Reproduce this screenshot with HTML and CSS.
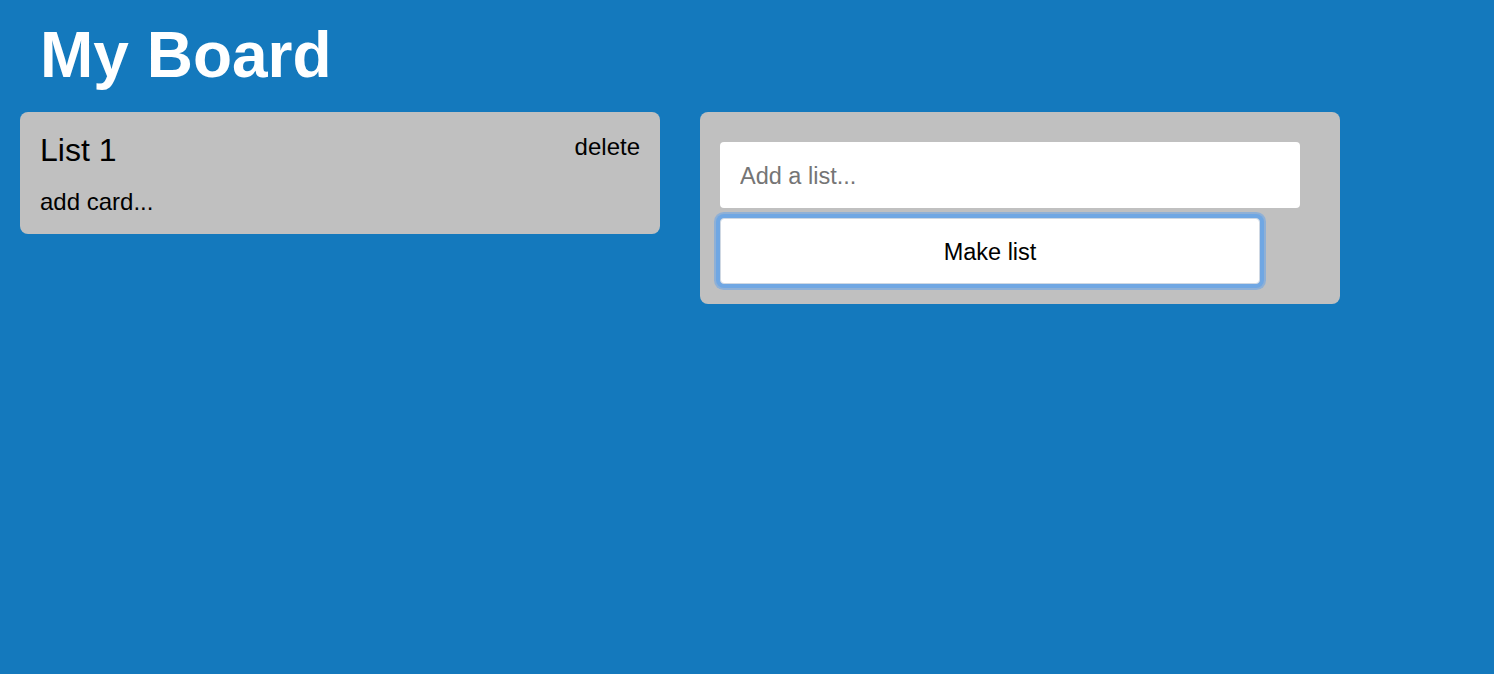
FILE: index.html
```html
<!DOCTYPE html>
<html>
<head>
<meta charset="utf-8">
<link rel="stylesheet" href="styles.css">
</head>
<body>
<h1 class="board-title">My Board</h1>
<div class="board">
  <div class="list">
    <div class="list-header">
      <h2 class="list-title">List 1</h2>
      <span class="list-delete">delete</span>
    </div>
    <div class="add-card">add card...</div>
  </div>
  <div class="list new-list">
    <input class="list-input" type="text" placeholder="Add a list...">
    <button class="make-btn">Make list</button>
  </div>
</div>
</body>
</html>
```
FILE: styles.css
```css
html, body {
  margin: 0;
  height: 100%;
}
body {
  background: #1479bd;
  font-family: "Liberation Sans", Arial, Helvetica, sans-serif;
  color: #000;
}
.board-title {
  margin: 0;
  padding: 18px 40px 0;
  font-size: 64px;
  line-height: 74px;
  font-weight: bold;
  color: #fff;
}
.board {
  display: flex;
  align-items: flex-start;
  gap: 40px;
  padding: 20px 20px 0;
}
.list {
  width: 640px;
  box-sizing: border-box;
  background: #c0c0c0;
  border-radius: 8px;
  padding: 20px;
}
.list-header {
  display: flex;
  justify-content: space-between;
  align-items: flex-start;
}
.list-title {
  margin: 0;
  font-size: 32px;
  line-height: 36px;
  font-weight: normal;
}
.list-delete {
  font-size: 24px;
  line-height: 27px;
  margin-top: 1px;
}
.add-card {
  margin-top: 21px;
  font-size: 24px;
  line-height: 25px;
}
.new-list {
  padding: 30px 40px 20px 20px;
  display: flex;
  flex-direction: column;
  align-items: flex-start;
  gap: 10px;
}
.list-input {
  width: 580px;
  height: 66px;
  box-sizing: border-box;
  border: none;
  border-radius: 4px;
  background: #fff;
  padding: 2px 20px 0;
  font-family: inherit;
  font-size: 23.5px;
  outline: none;
}
.list-input::placeholder {
  color: #757575;
}
.make-btn {
  width: 540px;
  height: 66px;
  box-sizing: border-box;
  background: #fff;
  border: 1px solid #cfd8e3;
  border-radius: 4px;
  padding-top: 3px;
  font-family: inherit;
  font-size: 23.5px;
  color: #000;
  box-shadow: 0 0 0 4px #70a7e3, 0 0 0 6px #8fb0d6;
}
```
